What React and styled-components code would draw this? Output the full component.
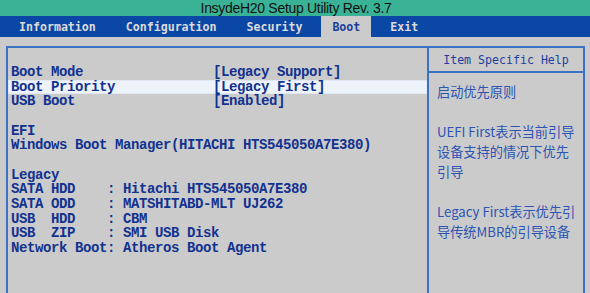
import React from 'react';
import styled, { createGlobalStyle } from 'styled-components';

const GlobalStyle = createGlobalStyle`
  html, body {
    margin: 0;
    padding: 0;
    background: #cbcbcb;
    overflow: hidden;
  }
  #root {
    height: 100vh;
  }
`;

const Screen = styled.div`
  display: flex;
  flex-direction: column;
  height: 100vh;
  background: #cbcbcb;
`;

const TitleBar = styled.div`
  height: 16px;
  background: #3ab296;
  color: #111;
  font-family: "Liberation Sans", Arial, sans-serif;
  font-size: 14px;
  letter-spacing: -0.3px;
  line-height: 17px;
  text-align: center;
  padding-left: 2px;
`;

const MenuBar = styled.div`
  height: 21px;
  background: #0b47a5;
  display: flex;
  align-items: stretch;
  padding-left: 5px;
  gap: 2px;
`;

const Tab = styled.div`
  display: flex;
  align-items: center;
  padding: 0 ${p => (p.active ? '11px' : '14px')};
  margin: 0 ${p => (p.active ? '3px' : '0')};
  font-family: "DejaVu Sans Mono", "Liberation Mono", monospace;
  font-weight: bold;
  font-size: 11.6px;
  color: ${p => (p.active ? '#1c3f9e' : '#dcdcdc')};
  background: ${p => (p.active ? '#cbcbcb' : 'transparent')};
`;

const Frame = styled.div`
  flex: 1;
  display: flex;
  margin: 9px 5px -10px 6px;
  border: 2px solid #3b72c6;
`;

const MainPane = styled.div`
  flex: 0 0 419px;
  border-right: 2px solid #3b72c6;
  padding-top: 17px;
  font-family: "Liberation Mono", "Courier New", monospace;
  font-weight: bold;
  font-size: 14px;
  letter-spacing: -0.4px;
  color: #12328f;
`;

const Row = styled.div`
  display: flex;
  height: 14.67px;
  line-height: 14.67px;
  padding-left: 3px;
  white-space: pre;
  background: ${p => (p.selected ? '#eef3fa' : 'transparent')};
  box-shadow: ${p => (p.selected ? 'inset 0 0 0 1px #dfe8f4' : 'none')};
`;

const Label = styled.span`
  width: 202px;
`;

const HelpPane = styled.div`
  flex: 1;
  display: flex;
  flex-direction: column;
`;

const HelpHeader = styled.div`
  height: 23px;
  border-bottom: 2px solid #3b72c6;
  display: flex;
  align-items: center;
  justify-content: center;
  font-family: "DejaVu Sans Mono", "Liberation Mono", monospace;
  font-size: 11.6px;
  color: #1c3f9e;
`;

const HelpBody = styled.div`
  padding: 9px 0 0 8px;
  font-family: "Noto Sans CJK SC", "Noto Sans", sans-serif;
  font-size: 13.2px;
  line-height: 20px;
  color: #2c54b4;
`;

const HelpLine = styled.div`
  height: 20px;
  white-space: nowrap;
`;

const tabs = ['Information', 'Configuration', 'Security', 'Boot', 'Exit'];

const rows = [
  { label: 'Boot Mode', value: '[Legacy Support]' },
  { label: 'Boot Priority', value: '[Legacy First]', selected: true },
  { label: 'USB Boot', value: '[Enabled]' },
  { label: '' },
  { label: 'EFI' },
  { label: 'Windows Boot Manager(HITACHI HTS545050A7E380)' },
  { label: '' },
  { label: 'Legacy' },
  { label: 'SATA HDD    : Hitachi HTS545050A7E380' },
  { label: 'SATA ODD    : MATSHITABD-MLT UJ262' },
  { label: 'USB  HDD    : CBM' },
  { label: 'USB  ZIP    : SMI USB Disk' },
  { label: 'Network Boot: Atheros Boot Agent' },
];

const help = [
  '启动优先原则',
  '',
  'UEFI First表示当前引导',
  '设备支持的情况下优先',
  '引导',
  '',
  'Legacy First表示优先引',
  '导传统MBR的引导设备',
];

export default function App() {
  return (
    <>
      <GlobalStyle />
      <Screen>
        <TitleBar>InsydeH20 Setup Utility Rev. 3.7</TitleBar>
        <MenuBar>
          {tabs.map(t => (
            <Tab key={t} active={t === 'Boot'}>{t}</Tab>
          ))}
        </MenuBar>
        <Frame>
          <MainPane>
            {rows.map((r, i) => (
              <Row key={i} selected={r.selected}>
                {r.value ? (
                  <>
                    <Label>{r.label}</Label>
                    <span>{r.value}</span>
                  </>
                ) : (
                  r.label
                )}
              </Row>
            ))}
          </MainPane>
          <HelpPane>
            <HelpHeader>Item Specific Help</HelpHeader>
            <HelpBody>
              {help.map((h, i) => (
                <HelpLine key={i}>{h}</HelpLine>
              ))}
            </HelpBody>
          </HelpPane>
        </Frame>
      </Screen>
    </>
  );
}
